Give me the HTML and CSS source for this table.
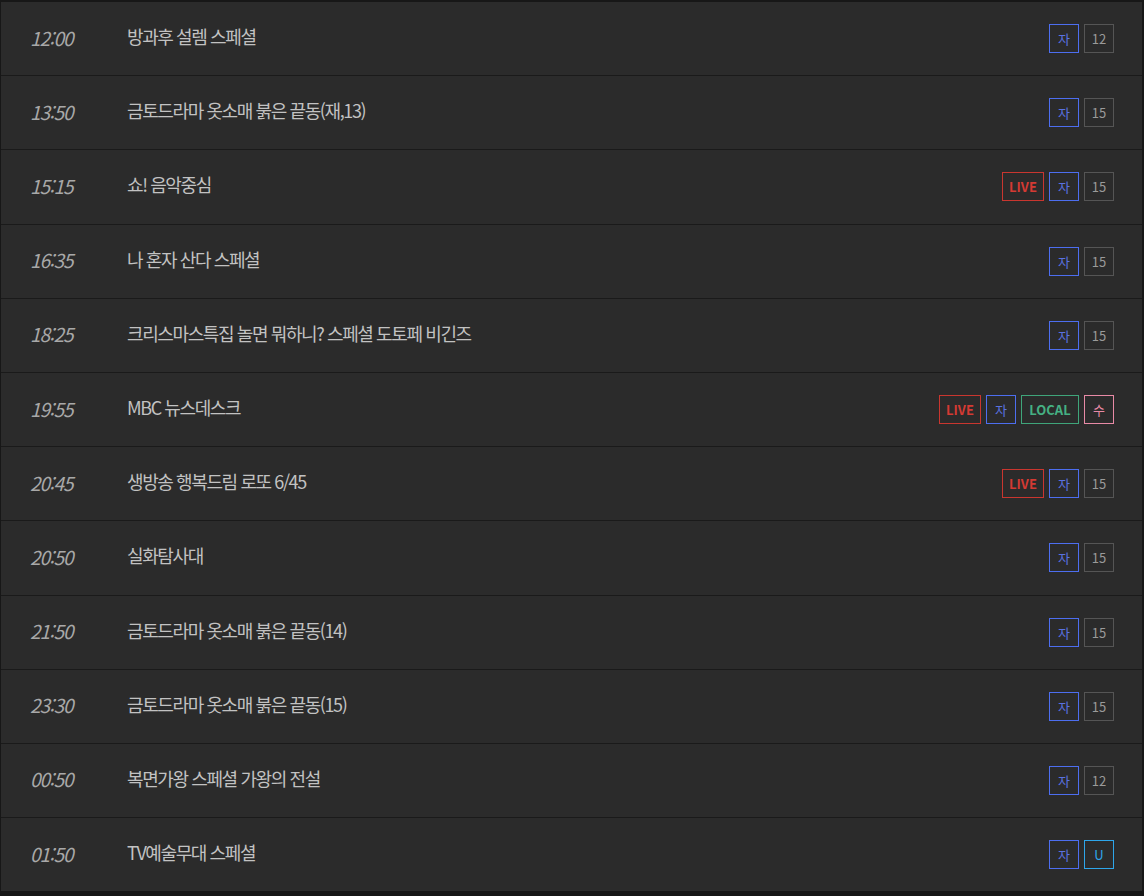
FILE: index.html
```html
<!DOCTYPE html>
<html lang="ko">
<head>
<meta charset="utf-8">
<link rel="stylesheet" href="styles.css">
</head>
<body>
<div class="schedule">
  <div class="row"><span class="time">12:00</span><span class="title">방과후 설렘 스페셜</span><span class="tags"><span class="tag sub">자</span><span class="tag age">12</span></span></div>
  <div class="row"><span class="time">13:50</span><span class="title">금토드라마 옷소매 붉은 끝동(재,13)</span><span class="tags"><span class="tag sub">자</span><span class="tag age">15</span></span></div>
  <div class="row"><span class="time">15:15</span><span class="title">쇼! 음악중심</span><span class="tags"><span class="tag live">LIVE</span><span class="tag sub">자</span><span class="tag age">15</span></span></div>
  <div class="row"><span class="time">16:35</span><span class="title">나 혼자 산다 스페셜</span><span class="tags"><span class="tag sub">자</span><span class="tag age">15</span></span></div>
  <div class="row"><span class="time">18:25</span><span class="title">크리스마스특집 놀면 뭐하니? 스페셜 도토페 비긴즈</span><span class="tags"><span class="tag sub">자</span><span class="tag age">15</span></span></div>
  <div class="row"><span class="time">19:55</span><span class="title">MBC 뉴스데스크</span><span class="tags"><span class="tag live">LIVE</span><span class="tag sub">자</span><span class="tag local">LOCAL</span><span class="tag sign">수</span></span></div>
  <div class="row"><span class="time">20:45</span><span class="title">생방송 행복드림 로또 6/45</span><span class="tags"><span class="tag live">LIVE</span><span class="tag sub">자</span><span class="tag age">15</span></span></div>
  <div class="row"><span class="time">20:50</span><span class="title">실화탐사대</span><span class="tags"><span class="tag sub">자</span><span class="tag age">15</span></span></div>
  <div class="row"><span class="time">21:50</span><span class="title">금토드라마 옷소매 붉은 끝동(14)</span><span class="tags"><span class="tag sub">자</span><span class="tag age">15</span></span></div>
  <div class="row"><span class="time">23:30</span><span class="title">금토드라마 옷소매 붉은 끝동(15)</span><span class="tags"><span class="tag sub">자</span><span class="tag age">15</span></span></div>
  <div class="row"><span class="time">00:50</span><span class="title">복면가왕 스페셜 가왕의 전설</span><span class="tags"><span class="tag sub">자</span><span class="tag age">12</span></span></div>
  <div class="row"><span class="time">01:50</span><span class="title">TV예술무대 스페셜</span><span class="tags"><span class="tag sub">자</span><span class="tag uhd">U</span></span></div>
</div>
</body>
</html>
```
FILE: styles.css
```css
html, body {
  margin: 0;
  padding: 0;
  background: #161616;
}
body {
  font-family: "Noto Sans CJK KR", "Noto Sans", sans-serif;
  width: 1144px;
  height: 896px;
  overflow: hidden;
}
.schedule {
  background: #2b2b2b;
  border-top: 2px solid #171717;
  border-left: 1px solid #171717;
  border-right: 2px solid #171717;
}
.row {
  display: flex;
  align-items: center;
  height: 73.2px;
  border-bottom: 1px solid #1a1a1a;
  padding: 0 28px 0 29px;
}
.row:last-child {
  border-bottom: none;
}
.time {
  width: 97px;
  font-size: 19px;
  font-style: italic;
  color: #a8a8a8;
  letter-spacing: -1px;
  margin-top: -3px;
}
.title {
  flex: 1;
  font-size: 18px;
  color: #c2c2c2;
  letter-spacing: -1.4px;
  margin-top: -5px;
}
.tags {
  display: flex;
  gap: 5px;
}
.tag {
  box-sizing: border-box;
  height: 29px;
  min-width: 30px;
  padding: 0 6px;
  border: 1px solid #555;
  display: flex;
  align-items: center;
  justify-content: center;
  font-size: 13px;
  color: #9a9a9a;
}
.tag.sub { border-color: #4d6ef0; color: #5a72e0; }
.tag.live { border-color: #c9362f; color: #d43a33; font-weight: bold; min-width: 42px; }
.tag.local { border-color: #3fa57a; color: #45b083; font-weight: bold; min-width: 58px; }
.tag.sign { border-color: #e88aa6; color: #e88aa6; }
.tag.uhd { border-color: #2ea6ea; color: #2ea6ea; }
```
